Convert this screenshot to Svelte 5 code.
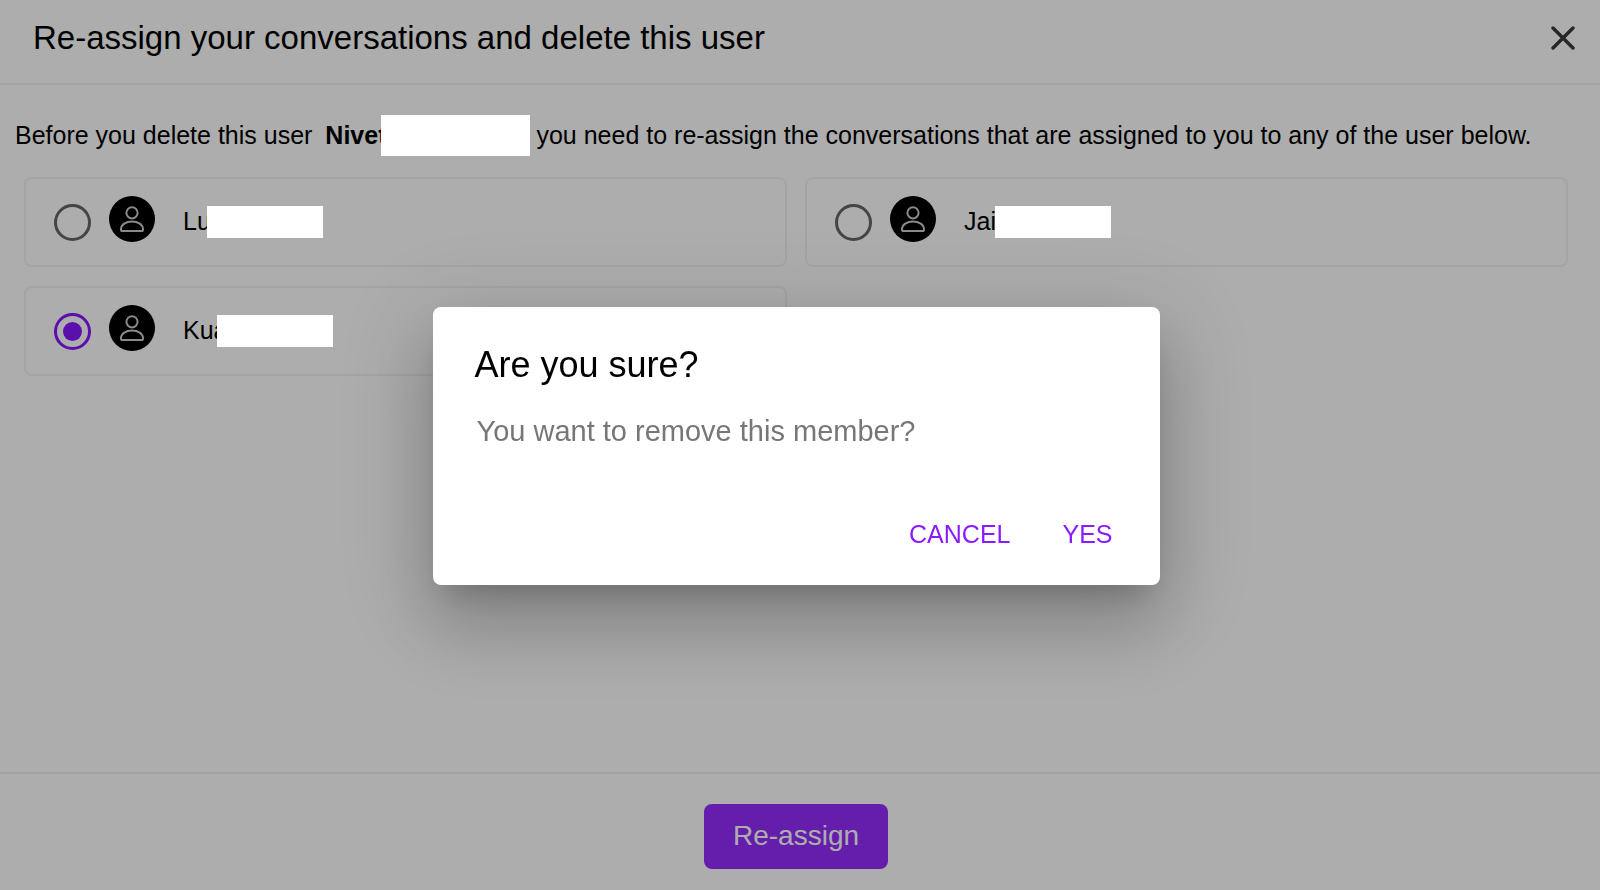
<script lang="ts">
  interface Member {
    id: string;
    name: string;
    // how much of the name is readable before the mask starts, in px
    shown: number;
  }

  const members: Member[] = [
    { id: 'lu', name: 'Lu', shown: 24 },
    { id: 'jai', name: 'Jai', shown: 31 },
    { id: 'kua', name: 'Kua', shown: 34 },
  ];

  let selected = $state('kua');
  let confirming = $state(true);
</script>

<div class="page">
  <header class="page-header">
    <h1>Re-assign your conversations and delete this user</h1>
    <button class="close" type="button" aria-label="Close">
      <svg viewBox="0 0 24 24" width="24" height="24" aria-hidden="true">
        <path d="M2 2 L22 22 M22 2 L2 22" />
      </svg>
    </button>
  </header>

  <main>
    <p class="intro">
      Before you delete this user <strong>Nivet</strong><span class="mask wide"></span> you need to
      re-assign the conversations that are assigned to you to any of the user below.
    </p>

    <div class="members" role="radiogroup" aria-label="Members">
      {#each members as member (member.id)}
        <label class="member">
          <input type="radio" name="member" value={member.id} bind:group={selected} />
          <span class="avatar">
            <svg viewBox="0 0 46 46" width="46" height="46" aria-hidden="true">
              <circle cx="23" cy="16.8" r="5.6" />
              <path d="M12 33.4 C12 28.6 17 25.6 23 25.6 C29 25.6 34 28.6 34 33.4 C34 34.6 33.5 35 32.6 35 H13.4 C12.5 35 12 34.6 12 33.4 Z" />
            </svg>
          </span>
          <span class="name" style="width: {member.shown}px">{member.name}</span>
          <span class="mask"></span>
        </label>
      {/each}
    </div>
  </main>

  <footer>
    <button class="primary" type="button" onclick={() => (confirming = true)}>Re-assign</button>
  </footer>
</div>

{#if confirming}
  <div class="backdrop"></div>
  <div class="dialog-layer">
    <div class="dialog" role="alertdialog" aria-modal="true" aria-labelledby="dialog-title">
      <h2 id="dialog-title">Are you sure?</h2>
      <p>You want to remove this member?</p>
      <div class="actions">
        <button type="button" onclick={() => (confirming = false)}>CANCEL</button>
        <button type="button" onclick={() => (confirming = false)}>YES</button>
      </div>
    </div>
  </div>
{/if}

<style>
  :global(body) {
    margin: 0;
    background: #fff;
  }
  .page,
  .dialog-layer {
    font-family: 'Liberation Sans', Arial, sans-serif;
    font-size: 25px;
  }
  .page {
    display: flex;
    flex-direction: column;
    min-height: 100vh;
    color: #000;
  }
  button {
    font: inherit;
    border: 0;
    background: none;
    cursor: pointer;
  }
  .page-header {
    display: flex;
    align-items: center;
    justify-content: space-between;
    padding: 17px 25px 24px 33px;
    border-bottom: 2px solid #f1f1f1;
  }
  h1 {
    margin: 0;
    font-size: 33px;
    font-weight: normal;
    line-height: 42px;
  }
  .close {
    display: flex;
    padding: 0;
  }
  .close svg {
    fill: none;
    stroke: #3a3a3a;
    stroke-width: 3.4;
    stroke-linecap: round;
  }
  main {
    flex: 1;
  }
  .intro {
    margin: 30px 15px 21px;
    line-height: 41px;
  }
  .intro strong {
    margin-left: 6px;
  }
  .mask {
    display: inline-block;
    position: relative;
    z-index: 2;
    width: 116px;
    height: 32px;
    background: #fff;
    vertical-align: top;
  }
  .mask.wide {
    width: 149px;
    height: 41px;
    margin-left: -6px;
  }
  .members {
    display: grid;
    grid-template-columns: 1fr 1fr;
    gap: 19px 18px;
    padding: 0 32px 0 24px;
  }
  .member {
    display: flex;
    align-items: center;
    height: 86px;
    padding-left: 28px;
    border: 2px solid #f2f2f2;
    border-radius: 8px;
  }
  .member input {
    appearance: none;
    display: grid;
    place-items: center;
    width: 37px;
    height: 37px;
    margin: 0 18px 0 0;
    border: 3px solid #666;
    border-radius: 50%;
  }
  .member input:checked {
    border-color: #8719ff;
  }
  .member input:checked::before {
    content: '';
    width: 19px;
    height: 19px;
    border-radius: 50%;
    background: #8719ff;
  }
  .avatar {
    display: flex;
    margin: 0 28px 6px 0;
    border-radius: 50%;
    background: #000;
  }
  .avatar svg {
    fill: none;
    stroke: #ccc;
    stroke-width: 2;
  }
  .name {
    overflow: hidden;
    padding-bottom: 2px;
    line-height: 32px;
    white-space: nowrap;
  }
  footer {
    display: flex;
    justify-content: center;
    padding: 30px 8px 21px 0;
    border-top: 2px solid #f1f1f1;
  }
  .primary {
    padding: 0 29px 2px;
    border-radius: 8px;
    background: #952dfe;
    color: #fff;
    font-size: 28px;
    line-height: 63px;
  }
  .backdrop {
    position: fixed;
    inset: 0;
    z-index: 1;
    background: rgba(0, 0, 0, 0.32);
  }
  .dialog-layer {
    position: fixed;
    inset: 0;
    z-index: 3;
    display: flex;
    align-items: center;
    justify-content: center;
    padding: 2px 8px 0 0;
  }
  .dialog {
    box-sizing: border-box;
    width: 727px;
    padding: 37px 31px 30px 42px;
    border-radius: 8px;
    background: #fff;
    box-shadow:
      0 20px 28px -13px rgba(0, 0, 0, 0.2),
      0 45px 70px 6px rgba(0, 0, 0, 0.14),
      0 17px 86px 15px rgba(0, 0, 0, 0.12);
  }
  .dialog h2 {
    margin: 0 0 25px;
    font-size: 36px;
    font-weight: normal;
    line-height: 42px;
  }
  .dialog p {
    margin: 0 0 61px;
    padding-left: 2px;
    color: #777;
    font-size: 29px;
    line-height: 41px;
  }
  .actions {
    display: flex;
    justify-content: flex-end;
    gap: 20px;
  }
  .actions button {
    padding: 0 16px;
    color: #8a1aff;
    line-height: 42px;
  }
</style>
